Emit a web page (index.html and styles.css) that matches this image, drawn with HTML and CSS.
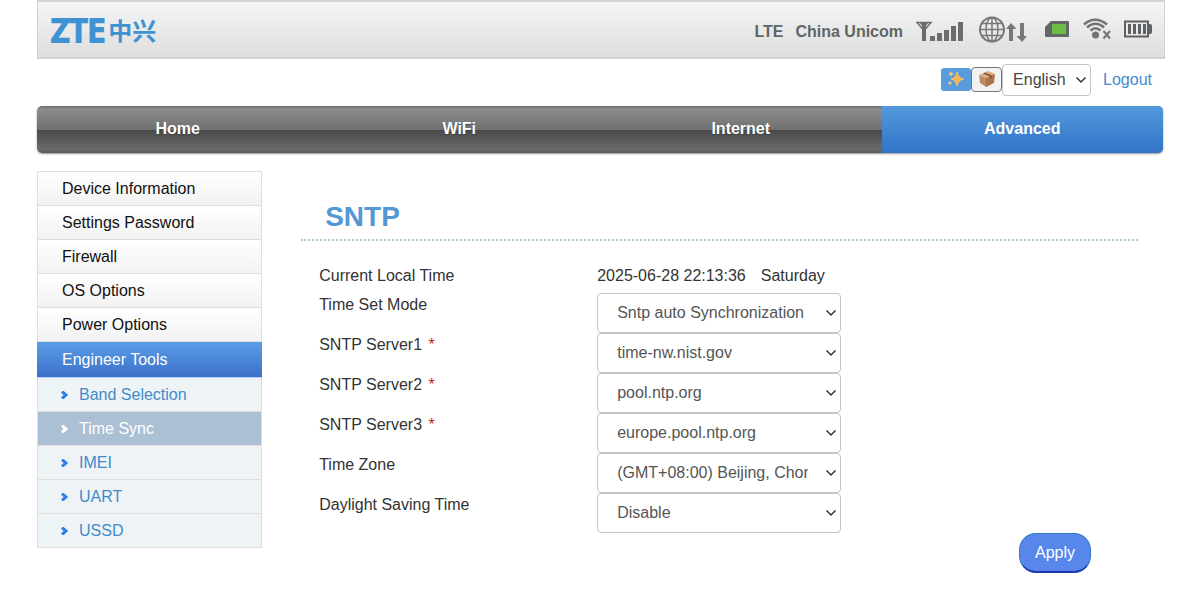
FILE: index.html
```html
<!DOCTYPE html>
<html lang="en">
<head>
<meta charset="utf-8">
<title>SNTP</title>
<link rel="stylesheet" href="styles.css">
</head>
<body>
<div class="page">
  <header class="topbar">
    <div class="logo"><span class="logo-latin">ZTE</span><span class="logo-cjk" lang="zh">中兴</span></div>
    <div class="status">
      <span class="network">LTE</span>
      <span class="operator">China Unicom</span>
      <svg class="icon-signal" width="48" height="22" viewBox="0 0 48 22" aria-hidden="true">
        <path d="M1 1.500H15L8 9.500Z M4.500 1.500L8 6L11.500 1.500" fill="none" stroke="#6a6c6d" stroke-width="1.500"/>
        <path d="M6 2H10V20H6ZM14 15H19V20H14ZM21 12H26V20H21ZM28 9H33V20H28ZM35 5H40V20H35ZM42 1H47V20H42Z" fill="#6a6c6d"/>
      </svg>
      <svg class="icon-globe" width="48" height="28" viewBox="0 0 48 28" aria-hidden="true">
        <g fill="none" stroke="#76787a" stroke-width="1.500">
          <circle cx="13" cy="13.500" r="12" stroke-width="2"/>
          <ellipse cx="13" cy="13.500" rx="6" ry="12"/>
          <path d="M13 1V26M1 13.500H25M3 7.500H23M3 19.500H23"/>
        </g>
        <path d="M32 7L37.500 13H34V25H30V13H27Z M43 26L48 20H45V7H41V20H37.500Z" fill="#76787a"/>
      </svg>
      <svg class="icon-sim" width="24" height="18" viewBox="0 0 24 18" aria-hidden="true">
        <path d="M0 7L6 1H23Q24 1 24 2V16Q24 17 23 17H1Q0 17 0 16Z" fill="#616668"/>
        <rect x="7" y="4" width="14" height="10" fill="#6cbd45"/>
      </svg>
      <svg class="icon-wifi" width="28" height="22" viewBox="0 0 28 22" aria-hidden="true">
        <g fill="none" stroke="#717375" stroke-width="2.500">
          <path d="M1 6.500Q12 -3 24 6.500M4 9.500Q12.500 2 21 9.500M7.500 12.500Q12.500 8 17.500 12.500"/>
          <path d="M20.500 13L27 20.500M27 13L20.500 20.500" stroke-width="2"/>
        </g>
        <circle cx="12.500" cy="17" r="3.500" fill="#717375"/>
      </svg>
      <svg class="icon-battery" width="28" height="18" viewBox="0 0 28 18" aria-hidden="true">
        <rect x="1" y="1.500" width="23" height="15" fill="none" stroke="#5f6264" stroke-width="2"/>
        <path d="M25 4H26Q28 4 28 6V12Q28 14 26 14H25ZM4 4H7V14H4ZM9 4H12V14H9ZM14 4H17V14H14ZM19 4H22V14H19Z" fill="#5f6264"/>
      </svg>
    </div>
  </header>

  <div class="tools">
    <button class="tool tool-sparkle" type="button" aria-label="Effects">
      <svg width="18" height="18" viewBox="0 0 18 18" aria-hidden="true">
        <path d="M10 2Q11 8 16.500 9Q11 10 10 16Q9 10 4 9Q9 8 10 2Z" fill="#f3b34d" stroke="#f6c56a"/>
        <path d="M4 1Q4.500 3.500 7 4Q4.500 4.500 4 7Q3.500 4.500 1 4Q3.500 3.500 4 1ZM3 10.500Q3.500 12.500 5.500 13Q3.500 13.500 3 15.500Q2.500 13.500 .5 13Q2.500 12.500 3 10.500Z" fill="#eec987"/>
      </svg>
    </button>
    <button class="tool tool-package" type="button" aria-label="Packages">
      <svg width="16" height="18" viewBox="0 0 16 18" aria-hidden="true">
        <path d="M0 5L9 1L16 4L7 8Z" fill="#dcab82"/>
        <path d="M0 5L7 8V17L1 13Z" fill="#c18a62"/>
        <path d="M7 8L16 4L15 13L7 17Z" fill="#ac744d"/>
        <path d="M4 3.500L6 2.500L13 5.500V8L11 9V6.500Z" fill="#8b5737"/>
      </svg>
    </button>
    <select class="language" aria-label="Language"><option>English</option></select>
    <a class="logout" href="#">Logout</a>
  </div>

  <nav class="mainnav">
    <a href="#">Home</a>
    <a href="#">WiFi</a>
    <a href="#">Internet</a>
    <a class="active" href="#">Advanced</a>
  </nav>

  <div class="columns">
    <nav class="sidebar">
      <a class="item" href="#">Device Information</a>
      <a class="item" href="#">Settings Password</a>
      <a class="item" href="#">Firewall</a>
      <a class="item" href="#">OS Options</a>
      <a class="item" href="#">Power Options</a>
      <a class="item open" href="#">Engineer Tools</a>
      <a class="sub" href="#"><svg class="chevron" width="7" height="8" viewBox="0 0 7 8"><path d="M1 0.500L5 4L1 7.500"/></svg>Band Selection</a>
      <a class="sub current" href="#"><svg class="chevron" width="7" height="8" viewBox="0 0 7 8"><path d="M1 0.500L5 4L1 7.500"/></svg>Time Sync</a>
      <a class="sub" href="#"><svg class="chevron" width="7" height="8" viewBox="0 0 7 8"><path d="M1 0.500L5 4L1 7.500"/></svg>IMEI</a>
      <a class="sub" href="#"><svg class="chevron" width="7" height="8" viewBox="0 0 7 8"><path d="M1 0.500L5 4L1 7.500"/></svg>UART</a>
      <a class="sub" href="#"><svg class="chevron" width="7" height="8" viewBox="0 0 7 8"><path d="M1 0.500L5 4L1 7.500"/></svg>USSD</a>
    </nav>

    <main class="content">
      <h1>SNTP</h1>
      <form class="settings">
        <div class="row row-time">
          <span>Current Local Time</span>
          <span class="clock"><span>2025-06-28 22:13:36</span><span>Saturday</span></span>
        </div>
        <div class="row">
          <label for="mode">Time Set Mode</label>
          <select id="mode" class="field"><option>Sntp auto Synchronization</option></select>
        </div>
        <div class="row">
          <label for="server1">SNTP Server1 <span class="required">*</span></label>
          <select id="server1" class="field"><option>time-nw.nist.gov</option></select>
        </div>
        <div class="row">
          <label for="server2">SNTP Server2 <span class="required">*</span></label>
          <select id="server2" class="field"><option>pool.ntp.org</option></select>
        </div>
        <div class="row">
          <label for="server3">SNTP Server3 <span class="required">*</span></label>
          <select id="server3" class="field"><option>europe.pool.ntp.org</option></select>
        </div>
        <div class="row">
          <label for="zone">Time Zone</label>
          <select id="zone" class="field"><option>(GMT+08:00) Beijing, Chongqing</option></select>
        </div>
        <div class="row">
          <label for="dst">Daylight Saving Time</label>
          <select id="dst" class="field"><option>Disable</option></select>
        </div>
        <div class="actions"><button class="apply" type="button">Apply</button></div>
      </form>
    </main>
  </div>
</div>
</body>
</html>
```

FILE: styles.css
```css
* {
  box-sizing: border-box;
}

body {
  margin: 0;
  background: #fff;
  color: #333;
  font-family: "Liberation Sans", Arial, sans-serif;
  font-size: 16px;
  line-height: 24px;
}

a {
  color: #428bca;
  text-decoration: none;
}

button,
select {
  font: inherit;
}

.page {
  padding: 0 37px;
}

.topbar {
  display: flex;
  align-items: center;
  justify-content: space-between;
  height: 59px;
  margin-right: -2px;
  padding: 0 12px 0 13px;
  border: 1px solid #d2d2d2;
  border-width: 2px 1px;
  background: linear-gradient(#f5f5f5, #dedede);
}

.logo {
  display: flex;
  align-items: center;
  gap: 3px;
  color: #3f92d2;
}

.logo-latin {
  font-family: "Open Sans", "Noto Sans", sans-serif;
  font-size: 32px;
  font-weight: 600;
  line-height: 40px;
  -webkit-text-stroke: 2px #3f92d2;
  stroke-linejoin: round;
}

.logo-cjk {
  font-family: "Noto Sans CJK SC", sans-serif;
  font-size: 24px;
  font-weight: 700;
  line-height: 40px;
}

.status {
  display: flex;
  align-items: center;
  color: #5f6666;
  font-weight: 700;
}

.operator {
  margin: 0 13px 0 12px;
}

.network,
.operator {
  padding-top: 4px;
}

.icon-signal {
  margin: 4px 15px 0 0;
}

.icon-sim {
  margin: 0 14px 0 18px;
}

.icon-battery {
  margin-left: 13px;
}

.icon-sim,
.icon-wifi,
.icon-battery {
  margin-bottom: 2px;
}

.tools {
  display: flex;
  align-items: center;
  justify-content: flex-end;
  height: 47px;
  padding: 0 11px 5px 0;
}

.tool {
  display: flex;
  align-items: center;
  justify-content: center;
  padding: 0;
  border: 0;
}

.tool-sparkle {
  width: 30px;
  height: 23px;
  margin-bottom: 2px;
  border-radius: 3px;
  background: #5a9bdc;
}

.tool-package {
  width: 31px;
  height: 25px;
  margin-bottom: 2px;
  border: 1px solid #777;
  border-radius: 4px;
  background: #f2f2f2;
}

.language,
.field {
  appearance: none;
  border: 1px solid #c6c6c6;
  border-radius: 4px;
  background: #fff url("data:image/svg+xml,%3Csvg xmlns='http://www.w3.org/2000/svg' width='12' height='8'%3E%3Cpath d='M1.500 1.500L6 6L10.500 1.500' fill='none' stroke='%23333' stroke-width='1.500'/%3E%3C/svg%3E") no-repeat right 3px center;
  color: #555;
}

.language {
  width: 89px;
  height: 32px;
  padding: 0 20px 0 10px;
  color: #444;
}

.logout {
  margin-left: 12px;
}

.mainnav {
  display: grid;
  grid-template-columns: repeat(4, 1fr);
  height: 47px;
  overflow: hidden;
  border-radius: 5px;
  background: linear-gradient(#6c6c6c 0, #8c8c8c 3px, #707070 50%, #484848 50%, #6b6b6b 93%, #575757);
  box-shadow: 0 1px 2px #999;
}

.mainnav a {
  color: #fff;
  font-weight: 700;
  line-height: 46px;
  text-align: center;
  text-shadow: 0 1px 1px #444;
}

.mainnav .active {
  background: linear-gradient(#5399dc, #3273c8);
  text-shadow: none;
}

.columns {
  display: grid;
  grid-template-columns: 1fr 4fr;
  align-items: start;
  padding-top: 18px;
}

.sidebar {
  border: 1px solid #dedede;
  border-bottom: 0;
}

.item,
.sub {
  display: flex;
  align-items: center;
  height: 34px;
  border-bottom: 1px solid #dedede;
}

.item {
  padding-left: 24px;
  background: linear-gradient(#fff, #f2f2f2);
  color: #111;
}

.item.open {
  height: 36px;
  margin: 0 -1px;
  padding-left: 25px;
  border-bottom-color: #b5d2f2;
  background: linear-gradient(#5b9de9, #3c70c8);
  color: #fff;
}

.sub {
  gap: 11px;
  padding-left: 23px;
  background: #eef3f6;
}

.sub.current {
  background: #abc0d4;
  color: #fff;
}

.chevron {
  fill: none;
  stroke: #2f80e4;
  stroke-width: 3;
}

.current .chevron {
  stroke: #fff;
}

.content {
  padding: 27px 25px 0 39px;
}

h1 {
  margin: 0;
  padding: 0 24px 3px;
  border-bottom: 2px dotted #a9c8d2;
  color: #5497d5;
  font-size: 28px;
  line-height: 38px;
}

.settings {
  padding: 23px 18px 0;
}

.row {
  display: grid;
  grid-template-columns: 278px minmax(0, 1fr);
  min-height: 40px;
}

.row-time {
  min-height: 29px;
}

.clock {
  display: flex;
  gap: 15px;
}

.required {
  padding-left: 2px;
  color: #c22;
}

.field {
  width: 244px;
  height: 40px;
  padding: 0 32px 0 19px;
}

.actions {
  display: flex;
  justify-content: flex-end;
  padding-right: 29px;
}

.apply {
  width: 72px;
  height: 40px;
  padding: 0;
  border: 1px solid #3478c4;
  border-bottom: 2px solid #1e36b0;
  border-radius: 17px;
  background: #5787ea;
  color: #fff;
}
```
